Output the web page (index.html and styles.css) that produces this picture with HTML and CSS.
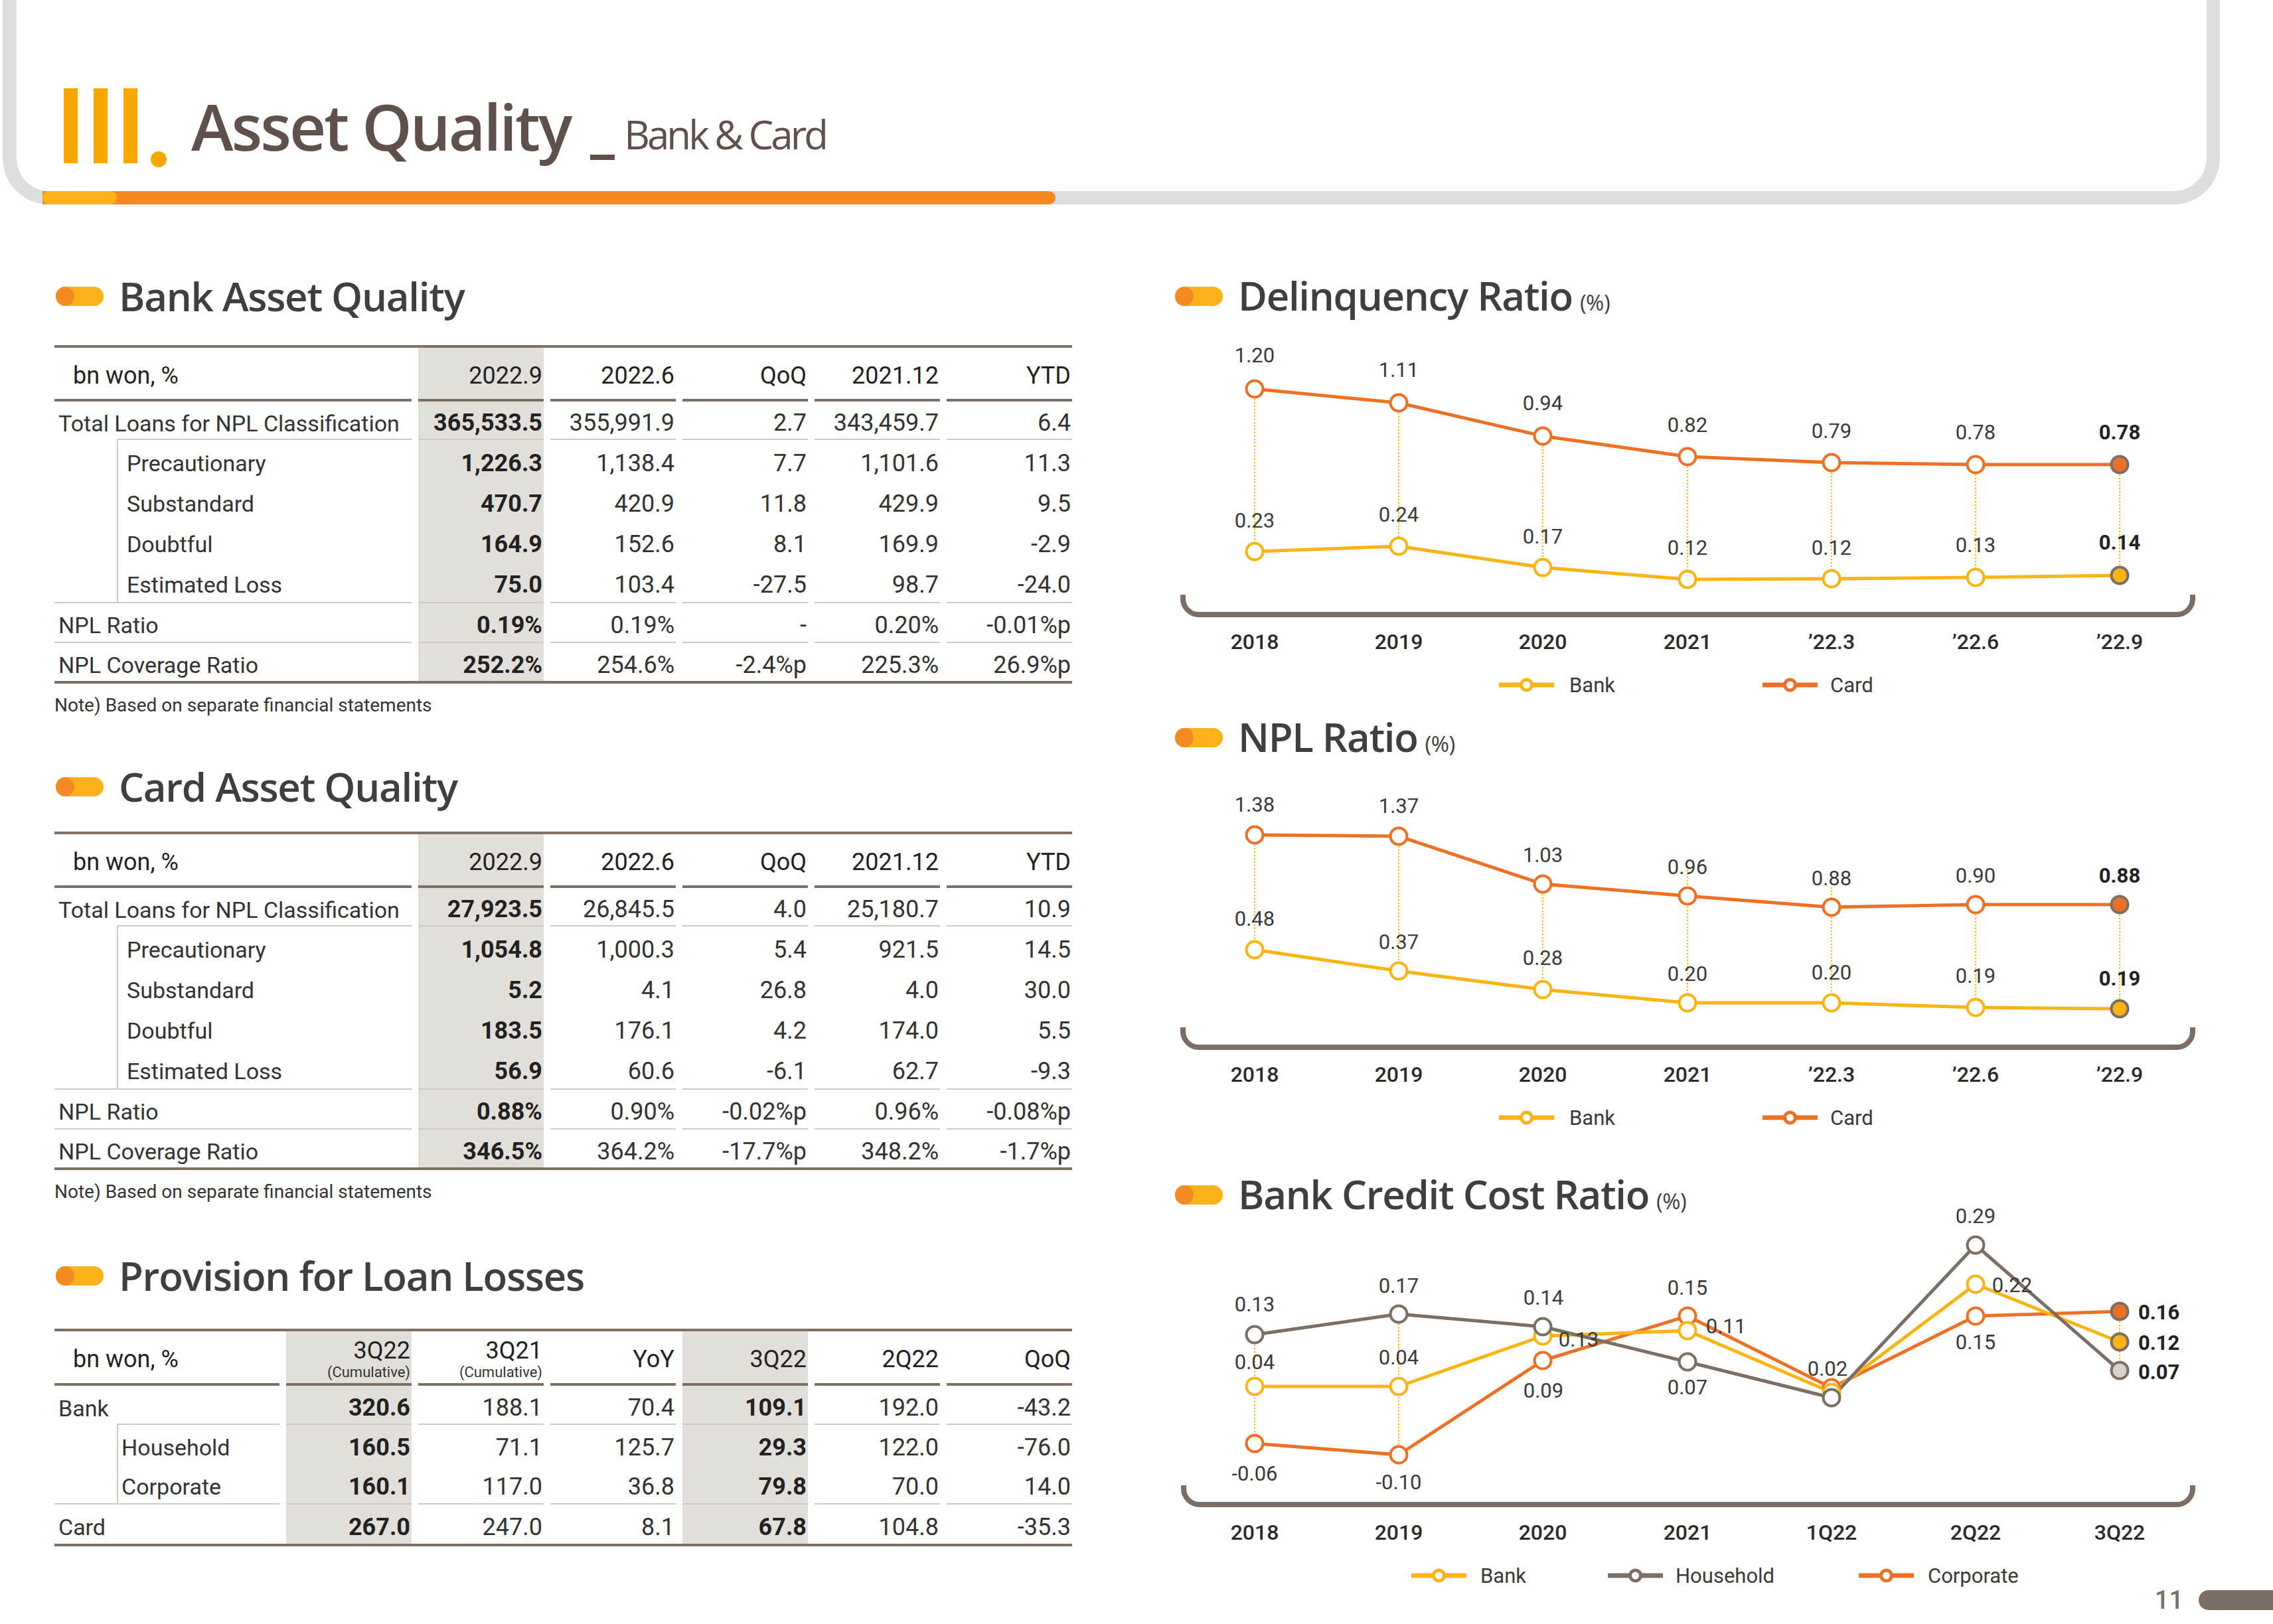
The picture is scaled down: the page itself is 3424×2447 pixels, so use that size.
FILE: index.html
```html
<!DOCTYPE html>
<html lang="en">
<head>
<meta charset="utf-8">
<title>Asset Quality - Bank &amp; Card</title>
<link rel="stylesheet" href="styles.css">
</head>
<body>
<div class="page">
  <header class="frame">
    <div class="title-row">
      <span class="roman"><i></i><i></i><i></i></span>
      <span class="roman-dot"></span>
      <h1 class="title">Asset Quality</h1>
      <span class="underscore"></span>
      <span class="subtitle">Bank &amp; Card</span>
    </div>
    <div class="frame-bar"></div>
  </header>

  <main class="main">
    <div class="col-left">
      <h2 class="sec-title t-bank"><svg class="ic" width="72" height="29" viewBox="0 0 72 29"><rect width="72" height="29" rx="14.5" fill="#fdb11b"/><ellipse cx="14" cy="14.5" rx="14" ry="14.5" fill="#f38a22"/></svg><span>Bank Asset Quality</span></h2>
      <div class="tbl-wrap w-bank">
        <table class="tbl">
          <colgroup><col><col class="c-d"><col class="c-d"><col class="c-d"><col class="c-d"><col class="c-d"></colgroup>
          <thead>
            <tr class="h81"><th class="lab">bn won, %</th><th class="sh">2022.9</th><th>2022.6</th><th>QoQ</th><th>2021.12</th><th>YTD</th></tr>
          </thead>
          <tbody>
            <tr class="h58 ln"><td class="lab lab-top">Total Loans for NPL Classification</td><td class="sh b">365,533.5</td><td>355,991.9</td><td>2.7</td><td>343,459.7</td><td>6.4</td></tr>
            <tr class="h61"><td class="lab sub">Precautionary</td><td class="sh b">1,226.3</td><td>1,138.4</td><td>7.7</td><td>1,101.6</td><td>11.3</td></tr>
            <tr class="h61"><td class="lab sub">Substandard</td><td class="sh b">470.7</td><td>420.9</td><td>11.8</td><td>429.9</td><td>9.5</td></tr>
            <tr class="h61"><td class="lab sub">Doubtful</td><td class="sh b">164.9</td><td>152.6</td><td>8.1</td><td>169.9</td><td>-2.9</td></tr>
            <tr class="h63 ln"><td class="lab sub">Estimated Loss</td><td class="sh b">75.0</td><td>103.4</td><td>-27.5</td><td>98.7</td><td>-24.0</td></tr>
            <tr class="h60 ln"><td class="lab">NPL Ratio</td><td class="sh b">0.19%</td><td>0.19%</td><td>-</td><td>0.20%</td><td>-0.01%p</td></tr>
            <tr class="h57"><td class="lab">NPL Coverage Ratio</td><td class="sh b">252.2%</td><td>254.6%</td><td>-2.4%p</td><td>225.3%</td><td>26.9%p</td></tr>
          </tbody>
        </table>
      </div>
      <p class="note">Note) Based on separate financial statements</p>

      <h2 class="sec-title t-card"><svg class="ic" width="72" height="29" viewBox="0 0 72 29"><rect width="72" height="29" rx="14.5" fill="#fdb11b"/><ellipse cx="14" cy="14.5" rx="14" ry="14.5" fill="#f38a22"/></svg><span>Card Asset Quality</span></h2>
      <div class="tbl-wrap w-card">
        <table class="tbl">
          <colgroup><col><col class="c-d"><col class="c-d"><col class="c-d"><col class="c-d"><col class="c-d"></colgroup>
          <thead>
            <tr class="h81"><th class="lab">bn won, %</th><th class="sh">2022.9</th><th>2022.6</th><th>QoQ</th><th>2021.12</th><th>YTD</th></tr>
          </thead>
          <tbody>
            <tr class="h58 ln"><td class="lab lab-top">Total Loans for NPL Classification</td><td class="sh b">27,923.5</td><td>26,845.5</td><td>4.0</td><td>25,180.7</td><td>10.9</td></tr>
            <tr class="h61"><td class="lab sub">Precautionary</td><td class="sh b">1,054.8</td><td>1,000.3</td><td>5.4</td><td>921.5</td><td>14.5</td></tr>
            <tr class="h61"><td class="lab sub">Substandard</td><td class="sh b">5.2</td><td>4.1</td><td>26.8</td><td>4.0</td><td>30.0</td></tr>
            <tr class="h61"><td class="lab sub">Doubtful</td><td class="sh b">183.5</td><td>176.1</td><td>4.2</td><td>174.0</td><td>5.5</td></tr>
            <tr class="h63 ln"><td class="lab sub">Estimated Loss</td><td class="sh b">56.9</td><td>60.6</td><td>-6.1</td><td>62.7</td><td>-9.3</td></tr>
            <tr class="h60 ln"><td class="lab">NPL Ratio</td><td class="sh b">0.88%</td><td>0.90%</td><td>-0.02%p</td><td>0.96%</td><td>-0.08%p</td></tr>
            <tr class="h57"><td class="lab">NPL Coverage Ratio</td><td class="sh b">346.5%</td><td>364.2%</td><td>-17.7%p</td><td>348.2%</td><td>-1.7%p</td></tr>
          </tbody>
        </table>
      </div>
      <p class="note">Note) Based on separate financial statements</p>

      <h2 class="sec-title t-prov"><svg class="ic" width="72" height="29" viewBox="0 0 72 29"><rect width="72" height="29" rx="14.5" fill="#fdb11b"/><ellipse cx="14" cy="14.5" rx="14" ry="14.5" fill="#f38a22"/></svg><span>Provision for Loan Losses</span></h2>
      <div class="tbl-wrap w-prov">
        <table class="tbl tbl-prov">
          <colgroup><col><col class="c-d"><col class="c-d"><col class="c-d"><col class="c-d"><col class="c-d"><col class="c-d"></colgroup>
          <thead>
            <tr class="h82"><th class="lab">bn won, %</th><th class="sh">3Q22<span class="cum">(Cumulative)</span></th><th>3Q21<span class="cum">(Cumulative)</span></th><th>YoY</th><th class="sh">3Q22</th><th>2Q22</th><th>QoQ</th></tr>
          </thead>
          <tbody>
            <tr class="h59 ln"><td class="lab lab-top">Bank</td><td class="sh b">320.6</td><td>188.1</td><td>70.4</td><td class="sh b">109.1</td><td>192.0</td><td>-43.2</td></tr>
            <tr class="h60"><td class="lab sub">Household</td><td class="sh b">160.5</td><td>71.1</td><td>125.7</td><td class="sh b">29.3</td><td>122.0</td><td>-76.0</td></tr>
            <tr class="h60 ln"><td class="lab sub">Corporate</td><td class="sh b">160.1</td><td>117.0</td><td>36.8</td><td class="sh b">79.8</td><td>70.0</td><td>14.0</td></tr>
            <tr class="h59"><td class="lab">Card</td><td class="sh b">267.0</td><td>247.0</td><td>8.1</td><td class="sh b">67.8</td><td>104.8</td><td>-35.3</td></tr>
          </tbody>
        </table>
      </div>
    </div>

    <div class="col-right">
      <h2 class="sec-title t-del"><svg class="ic" width="72" height="29" viewBox="0 0 72 29"><rect width="72" height="29" rx="14.5" fill="#fdb11b"/><ellipse cx="14" cy="14.5" rx="14" ry="14.5" fill="#f38a22"/></svg><span>Delinquency Ratio<small>(%)</small></span></h2>
      <svg class="chart" width="1560" height="605" viewBox="0 0 1560 605">
        <g class="dot">
          <line x1="120" y1="110" x2="120" y2="355"/><line x1="337" y1="131" x2="337" y2="347"/><line x1="554" y1="181" x2="554" y2="379"/><line x1="772" y1="212" x2="772" y2="397"/><line x1="989" y1="221" x2="989" y2="396"/><line x1="1206" y1="224" x2="1206" y2="394"/><line x1="1423" y1="224" x2="1423" y2="391"/>
        </g>
        <path class="axis" d="M12 420 V426 A24 24 0 0 0 36 450 H1509 A24 24 0 0 0 1533 426 V420"/>
        <polyline class="ln s-org" points="120,110 337,131 554,181 772,212 989,221 1206,224 1423,224"/>
        <polyline class="ln s-yel" points="120,355 337,347 554,379 772,397 989,396 1206,394 1423,391"/>
        <g class="mk s-org"><circle cx="120" cy="110" r="12.5"/><circle cx="337" cy="131" r="12.5"/><circle cx="554" cy="181" r="12.5"/><circle cx="772" cy="212" r="12.5"/><circle cx="989" cy="221" r="12.5"/><circle cx="1206" cy="224" r="12.5"/><circle class="end f-org" cx="1423" cy="224" r="12.5"/></g>
        <g class="mk s-yel"><circle cx="120" cy="355" r="12.5"/><circle cx="337" cy="347" r="12.5"/><circle cx="554" cy="379" r="12.5"/><circle cx="772" cy="397" r="12.5"/><circle cx="989" cy="396" r="12.5"/><circle cx="1206" cy="394" r="12.5"/><circle class="end f-yel" cx="1423" cy="391" r="12.5"/></g>
        <g class="v">
          <text x="120" y="70">1.20</text><text x="337" y="92">1.11</text><text x="554" y="142">0.94</text><text x="772" y="175">0.82</text><text x="989" y="184">0.79</text><text x="1206" y="186">0.78</text><text class="vb" x="1423" y="186">0.78</text>
          <text x="120" y="319">0.23</text><text x="337" y="310">0.24</text><text x="554" y="343">0.17</text><text x="772" y="360">0.12</text><text x="989" y="360">0.12</text><text x="1206" y="356">0.13</text><text class="vb" x="1423" y="352">0.14</text>
        </g>
        <g class="ax">
          <text x="120" y="502">2018</text><text x="337" y="502">2019</text><text x="554" y="502">2020</text><text x="772" y="502">2021</text><text x="989" y="502">’22.3</text><text x="1206" y="502">’22.6</text><text x="1423" y="502">’22.9</text>
        </g>
        <g class="lgd">
          <line class="s-yel" x1="488" y1="556" x2="571" y2="556"/><circle class="s-yel" cx="529.5" cy="556" r="8"/><text x="594" y="567">Bank</text>
          <line class="s-org" x1="885" y1="556" x2="968" y2="556"/><circle class="s-org" cx="926.5" cy="556" r="8"/><text x="987" y="567">Card</text>
        </g>
      </svg>

      <h2 class="sec-title"><svg class="ic" width="72" height="29" viewBox="0 0 72 29"><rect width="72" height="29" rx="14.5" fill="#fdb11b"/><ellipse cx="14" cy="14.5" rx="14" ry="14.5" fill="#f38a22"/></svg><span>NPL Ratio<small>(%)</small></span></h2>
      <svg class="chart" width="1560" height="629" viewBox="0 0 1560 629">
        <g class="dot">
          <line x1="120" y1="117" x2="120" y2="290"/><line x1="337" y1="119" x2="337" y2="322"/><line x1="554" y1="191" x2="554" y2="350"/><line x1="772" y1="170" x2="772" y2="370"/><line x1="989" y1="196" x2="989" y2="370"/><line x1="1206" y1="222" x2="1206" y2="377"/><line x1="1423" y1="222" x2="1423" y2="379"/>
        </g>
        <path class="axis" d="M12 407 V413 A24 24 0 0 0 36 437 H1509 A24 24 0 0 0 1533 413 V407"/>
        <polyline class="ln s-org" points="120,117 337,119 554,191 772,209 989,226 1206,222 1423,222"/>
        <polyline class="ln s-yel" points="120,290 337,322 554,350 772,370 989,370 1206,377 1423,379"/>
        <g class="mk s-org"><circle cx="120" cy="117" r="12.5"/><circle cx="337" cy="119" r="12.5"/><circle cx="554" cy="191" r="12.5"/><circle cx="772" cy="209" r="12.5"/><circle cx="989" cy="226" r="12.5"/><circle cx="1206" cy="222" r="12.5"/><circle class="end f-org" cx="1423" cy="222" r="12.5"/></g>
        <g class="mk s-yel"><circle cx="120" cy="290" r="12.5"/><circle cx="337" cy="322" r="12.5"/><circle cx="554" cy="350" r="12.5"/><circle cx="772" cy="370" r="12.5"/><circle cx="989" cy="370" r="12.5"/><circle cx="1206" cy="377" r="12.5"/><circle class="end f-yel" cx="1423" cy="379" r="12.5"/></g>
        <g class="v">
          <text x="120" y="82">1.38</text><text x="337" y="84">1.37</text><text x="554" y="158">1.03</text><text x="772" y="176">0.96</text><text x="989" y="193">0.88</text><text x="1206" y="189">0.90</text><text class="vb" x="1423" y="189">0.88</text>
          <text x="120" y="254">0.48</text><text x="337" y="289">0.37</text><text x="554" y="313">0.28</text><text x="772" y="337">0.20</text><text x="989" y="335">0.20</text><text x="1206" y="340">0.19</text><text class="vb" x="1423" y="344">0.19</text>
        </g>
        <g class="ax">
          <text x="120" y="489">2018</text><text x="337" y="489">2019</text><text x="554" y="489">2020</text><text x="772" y="489">2021</text><text x="989" y="489">’22.3</text><text x="1206" y="489">’22.6</text><text x="1423" y="489">’22.9</text>
        </g>
        <g class="lgd">
          <line class="s-yel" x1="488" y1="543" x2="571" y2="543"/><circle class="s-yel" cx="529.5" cy="543" r="8"/><text x="594" y="554">Bank</text>
          <line class="s-org" x1="885" y1="543" x2="968" y2="543"/><circle class="s-org" cx="926.5" cy="543" r="8"/><text x="987" y="554">Card</text>
        </g>
      </svg>

      <h2 class="sec-title"><svg class="ic" width="72" height="29" viewBox="0 0 72 29"><rect width="72" height="29" rx="14.5" fill="#fdb11b"/><ellipse cx="14" cy="14.5" rx="14" ry="14.5" fill="#f38a22"/></svg><span>Bank Credit Cost Ratio<small>(%)</small></span></h2>
      <svg class="chart" width="1560" height="570" viewBox="0 0 1560 570">
        <g class="dot">
          <line x1="120" y1="181" x2="120" y2="345"/><line x1="337" y1="150" x2="337" y2="362"/><line x1="1423" y1="146" x2="1423" y2="235"/>
        </g>
        <path class="axis" d="M13 408 V413 A24 24 0 0 0 37 437 H1509 A24 24 0 0 0 1533 413 V408"/>
        <polyline class="ln s-org" points="120,345 337,362 554,220 772,153 989,261 1206,153 1423,146"/>
        <polyline class="ln s-yel" points="120,259 337,259 554,183 772,175 989,268 1206,105 1423,192"/>
        <polyline class="ln s-gry" points="120,181 337,150 554,169 772,222 989,276 1206,46 1423,235"/>
        <g class="mk s-org"><circle cx="120" cy="345" r="12.5"/><circle cx="337" cy="362" r="12.5"/><circle cx="554" cy="220" r="12.5"/><circle cx="772" cy="153" r="12.5"/><circle cx="989" cy="261" r="12.5"/><circle cx="1206" cy="153" r="12.5"/><circle class="end f-org" cx="1423" cy="146" r="12.5"/></g>
        <g class="mk s-yel"><circle cx="120" cy="259" r="12.5"/><circle cx="337" cy="259" r="12.5"/><circle cx="554" cy="183" r="12.5"/><circle cx="772" cy="175" r="12.5"/><circle cx="989" cy="268" r="12.5"/><circle cx="1206" cy="105" r="12.5"/><circle class="end f-yel" cx="1423" cy="192" r="12.5"/></g>
        <g class="mk s-gry"><circle cx="120" cy="181" r="12.5"/><circle cx="337" cy="150" r="12.5"/><circle cx="554" cy="169" r="12.5"/><circle cx="772" cy="222" r="12.5"/><circle cx="989" cy="276" r="12.5"/><circle cx="1206" cy="46" r="12.5"/><circle class="end f-gry" cx="1423" cy="235" r="12.5"/></g>
        <g class="v">
          <text x="120" y="146">0.13</text><text x="120" y="233">0.04</text><text x="120" y="401">-0.06</text>
          <text x="337" y="118">0.17</text><text x="337" y="226">0.04</text><text x="337" y="414">-0.10</text>
          <text x="555" y="136">0.14</text><text x="608" y="199">0.13</text><text x="555" y="276">0.09</text>
          <text x="772" y="121">0.15</text><text x="830" y="179">0.11</text><text x="772" y="271">0.07</text>
          <text x="983" y="243">0.02</text>
          <text x="1206" y="13">0.29</text><text x="1261" y="117">0.22</text><text x="1206" y="203">0.15</text>
          <text class="vb st" x="1451" y="158">0.16</text><text class="vb st" x="1451" y="204">0.12</text><text class="vb st" x="1451" y="248">0.07</text>
        </g>
        <g class="ax">
          <text x="120" y="490">2018</text><text x="337" y="490">2019</text><text x="554" y="490">2020</text><text x="772" y="490">2021</text><text x="989" y="490">1Q22</text><text x="1206" y="490">2Q22</text><text x="1423" y="490">3Q22</text>
        </g>
        <g class="lgd">
          <line class="s-yel" x1="356" y1="544" x2="439" y2="544"/><circle class="s-yel" cx="397.5" cy="544" r="8"/><text x="460" y="555">Bank</text>
          <line class="s-gry" x1="652" y1="544" x2="735" y2="544"/><circle class="s-gry" cx="693.5" cy="544" r="8"/><text x="754" y="555">Household</text>
          <line class="s-org" x1="1030" y1="544" x2="1113" y2="544"/><circle class="s-org" cx="1071.5" cy="544" r="8"/><text x="1134" y="555">Corporate</text>
        </g>
      </svg>
    </div>
  </main>

  <footer class="footer">
    <span class="pnum">11</span>
    <span class="ptab"></span>
  </footer>
</div>
</body>
</html>
```

FILE: styles.css
```css
* { box-sizing: border-box; }
html, body { margin: 0; padding: 0; background: #fff; }
body { font-family: Roboto, "Liberation Sans", sans-serif; color: #333; }

.page { width: 3424px; height: 2447px; display: flex; flex-direction: column; overflow: hidden; }

/* ---------- header frame ---------- */
.frame {
  position: relative;
  flex: none;
  margin-left: 4px;
  width: 3340px;
  height: 308px;
  border: 20px solid #dcdddd;
  border-top: 0;
  border-left-width: 21px;
  border-radius: 0 0 70px 70px;
  padding: 133px 0 0 71px;
}
.title-row { display: flex; align-items: flex-end; height: 119px; }
.roman { display: flex; gap: 24px; margin-bottom: 6px; }
.roman i { display: block; width: 21px; height: 113px; background: #f6a800; }
.roman-dot { width: 24px; height: 24px; border-radius: 50%; background: #f6a800; margin-left: 20px; }
.title {
  margin: 0 0 14px 37px;
  font: 600 96px/96px "Open Sans", sans-serif;
  letter-spacing: -3px;
  color: #5f504b;
  white-space: nowrap;
}
.underscore { width: 37px; height: 8px; background: #5f504b; margin: 0 0 11px 30px; }
.subtitle {
  margin: 0 0 20px 14px;
  font: 400 60px/60px "Open Sans", sans-serif;
  letter-spacing: -4px;
  color: #5f504b;
  white-space: nowrap;
}
.frame-bar {
  position: absolute;
  left: 39px;
  bottom: -20px;
  width: 1526px;
  height: 20px;
  background: #f5891f;
  border-radius: 0 10px 10px 0;
}
.frame-bar::before {
  content: "";
  display: block;
  width: 112px;
  height: 20px;
  border-radius: 10px;
  background: #fdb11b;
}

/* ---------- main ---------- */
.main { display: flex; gap: 155px; padding-left: 82px; flex: none; }
.col-left { width: 1533px; flex: none; }
.col-right { width: 1560px; flex: none; }

.sec-title {
  display: flex;
  align-items: center;
  gap: 23px;
  height: 60px;
  margin: 0;
  font: 600 60px/60px "Open Sans", sans-serif;
  letter-spacing: -1.3px;
  color: #3f3f3f;
  white-space: nowrap;
}
.sec-title small {
  font: 400 33px "Open Sans", sans-serif;
  letter-spacing: -0.5px;
  margin-left: 11px;
  color: #3f3f3f;
}
.ic { flex: none; display: block; }
.col-left .ic { margin-left: 2px; }

.t-bank { margin-top: 108px; }
.w-bank { margin-top: 44px; }
.t-card { margin-top: 72px; }
.w-card { margin-top: 38px; }
.t-prov { margin-top: 76px; }
.w-prov { margin-top: 50px; }
.t-del { margin-top: 108px; }

.note { margin: 13px 0 0 0; font: 400 28px/40px Roboto, sans-serif; color: #333; white-space: nowrap; }

/* ---------- tables ---------- */
.tbl-wrap { border-top: 4px solid #7b6f66; border-bottom: 4px solid #7b6f66; }
.tbl {
  width: calc(100% + 20px);
  margin: 0 -10px;
  border-collapse: separate;
  border-spacing: 10px 0;
  table-layout: fixed;
  font: 400 36px/1 Roboto, sans-serif;
  color: #333;
}
.tbl col.c-d { width: 189px; }
.tbl th, .tbl td { padding: 8px 2px 0 0; text-align: right; white-space: nowrap; font-weight: 400; vertical-align: middle; }
.tbl th { border-bottom: 4px solid #7b6f66; color: #222; line-height: 40px; padding-top: 6px; }
.tbl .lab { text-align: left; padding-left: 6px; padding-right: 0; }
.tbl td.lab { font-size: 34px; }
.tbl th.lab { padding-left: 28px; }
.tbl .sh { background-color: #e2dfdb; }
.tbl .b { font-weight: 700; color: #222; }
.tbl tr.ln td { border-bottom: 2px solid #cdc8c2; }
.tbl tr.ln td.lab-top {
  border-bottom: 0;
  background: linear-gradient(#cdc8c2, #cdc8c2) no-repeat 94px 100% / calc(100% - 94px) 2px;
}
.tbl td.sub {
  padding-left: 109px;
  background: linear-gradient(#cdc8c2, #cdc8c2) no-repeat 94px 0 / 2px 100%;
}
.tbl-prov td.sub { padding-left: 101px; }
.cum { display: block; font-size: 22px; line-height: 26px; color: #333; }

.h57 { height: 57px; }
.h58 { height: 58px; }
.h59 { height: 59px; }
.h60 { height: 60px; }
.h61 { height: 61px; }
.h63 { height: 63px; }
.h81 { height: 81px; }
.h82 { height: 82px; }

/* ---------- charts ---------- */
.chart { display: block; overflow: visible; }
.chart .dot line { stroke: #f7b500; stroke-width: 2; stroke-dasharray: 2 3; }
.chart .axis { fill: none; stroke: #7a6e65; stroke-width: 8; }
.chart .ln { fill: none; stroke-width: 5; stroke-linejoin: round; }
.s-org { stroke: #ed7125; }
.s-yel { stroke: #fcb415; }
.s-gry { stroke: #7a6e65; }
.chart .mk circle { fill: #fff; stroke-width: 4; }
.chart .mk circle.end { stroke: #7a6e65; }
.chart .mk circle.f-org { fill: #ed7125; }
.chart .mk circle.f-yel { fill: #fcb415; }
.chart .mk circle.f-gry { fill: #d6d1cc; }
.chart .v text { font: 400 31px Roboto, sans-serif; fill: #3a3a3a; text-anchor: middle; }
.chart .v text.vb { font-weight: 700; fill: #222; }
.chart .v text.st { text-anchor: start; }
.chart .ax text { font: 500 32px Roboto, sans-serif; fill: #2b2b2b; text-anchor: middle; }
.chart .lgd line { stroke-width: 7; }
.chart .lgd circle { fill: #fff; stroke-width: 5; }
.chart .lgd text { font: 400 31px Roboto, sans-serif; fill: #3a3a3a; }

/* ---------- footer ---------- */
.footer {
  flex: none;
  display: flex;
  justify-content: flex-end;
  align-items: center;
  gap: 23px;
  height: 30px;
  margin-top: -4px;
}
.pnum { font: 500 38px/30px Roboto, sans-serif; color: #7a6e65; }
.ptab { width: 112px; height: 30px; background: #7a6e65; border-radius: 15px 0 0 15px; }
```
